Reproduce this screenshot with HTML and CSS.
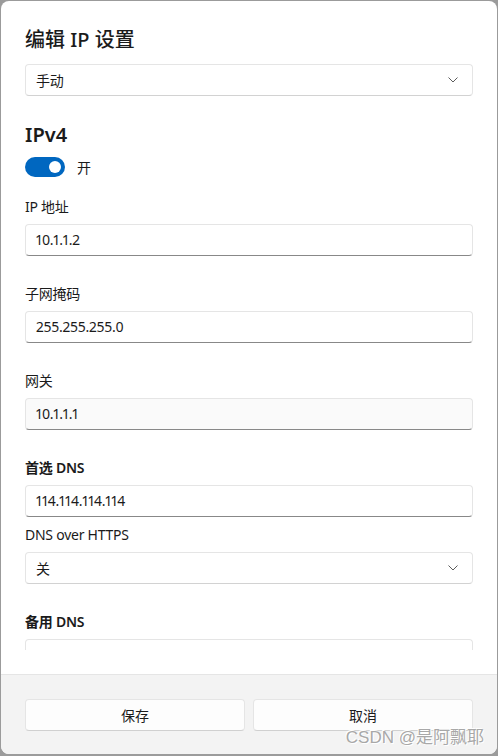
FILE: index.html
```html
<!DOCTYPE html>
<html lang="zh-CN">
<head>
  <meta charset="UTF-8">
  <title>编辑 IP 设置</title>
  <link rel="stylesheet" href="styles.css">
</head>
<body>
  <div class="dialog">
    <div class="dialog-body">
      <div class="scroll">
        <h1 class="title">编辑 IP 设置</h1>
        <div class="combo">
          <span>手动</span>
          <svg class="chevron" width="10" height="6" viewBox="0 0 10 6"><path d="M0.5 0.5 L5 5 L9.5 0.5" fill="none" stroke="#5c5c5c" stroke-width="1"/></svg>
        </div>

        <h2 class="section">IPv4</h2>
        <div class="toggle-row">
          <span class="toggle on"><span class="knob"></span></span>
          <span>开</span>
        </div>

        <div class="field first">
          <label>IP 地址</label>
          <div class="textbox">10.1.1.2</div>
        </div>
        <div class="field">
          <label>子网掩码</label>
          <div class="textbox">255.255.255.0</div>
        </div>
        <div class="field">
          <label>网关</label>
          <div class="textbox muted">10.1.1.1</div>
        </div>
        <div class="field">
          <label class="strong">首选 DNS</label>
          <div class="textbox">114.114.114.114</div>
        </div>
        <div class="field tight">
          <label>DNS over HTTPS</label>
          <div class="combo">
            <span>关</span>
            <svg class="chevron" width="10" height="6" viewBox="0 0 10 6"><path d="M0.5 0.5 L5 5 L9.5 0.5" fill="none" stroke="#5c5c5c" stroke-width="1"/></svg>
          </div>
        </div>
        <div class="field">
          <label class="strong">备用 DNS</label>
          <div class="textbox"></div>
        </div>
      </div>
    </div>

    <div class="dialog-footer">
      <button class="btn">保存</button>
      <button class="btn">取消</button>
    </div>
  </div>

  <div class="watermark">CSDN @是阿飘耶</div>
</body>
</html>
```

FILE: styles.css
```css
body {
  margin: 0;
  height: 756px;
  background: #9b9b9b;
  font-family: "Noto Sans", "Noto Sans CJK SC", sans-serif;
  font-size: 14px;
  font-variant-numeric: proportional-nums;
  letter-spacing: -0.25px;
  color: #1b1b1b;
  overflow: hidden;
}
.dialog {
  margin: 1px 1px 0 1px;
  height: 753px;
  width: 496px;
  background: #fff;
  border-radius: 8px;
  display: flex;
  flex-direction: column;
  overflow: hidden;
}
.dialog-body {
  flex: 1;
  padding: 25px 24px 24px 24px;
  min-height: 0;
}
.scroll {
  height: 100%;
  overflow: hidden;
}
.title {
  margin: 0 0 10px 0;
  font-size: 20px;
  line-height: 28px;
  font-weight: 500;
  letter-spacing: 0;
}
.combo {
  height: 30px;
  border: 1px solid #e5e5e5;
  border-bottom-color: #d2d2d2;
  border-radius: 4px;
  display: flex;
  align-items: center;
  justify-content: space-between;
  padding: 0 14px 0 10px;
  background: #fff;
}
.chevron {
  display: block;
}
.section {
  margin: 25px 0 8px 0;
  font-size: 20px;
  line-height: 28px;
  font-weight: 600;
  letter-spacing: 0;
}
.toggle-row {
  display: flex;
  align-items: center;
  gap: 12px;
  height: 20px;
}
.toggle {
  width: 40px;
  height: 20px;
  border-radius: 10px;
  background: #0067c0;
  display: flex;
  align-items: center;
  justify-content: flex-end;
  padding: 0 4px;
  box-sizing: border-box;
}
.knob {
  width: 12px;
  height: 12px;
  border-radius: 50%;
  background: #fff;
}
.field {
  margin-top: 28px;
}
.field.first {
  margin-top: 20px;
}
.field.tight {
  margin-top: 8px;
}
.field label {
  display: block;
  line-height: 20px;
  margin-bottom: 7px;
}
.field label.strong {
  font-weight: 600;
}
.textbox {
  height: 30px;
  line-height: 30px;
  border: 1px solid #e5e5e5;
  border-bottom-color: #888;
  border-radius: 4px;
  padding: 0 10px;
  background: #fff;
}
.textbox.muted {
  background: #fafafa;
}
.dialog-footer {
  height: 80px;
  border-top: 1px solid #e5e5e5;
  background: #f3f3f3;
  padding: 24px 24px 0 24px;
  display: flex;
  gap: 8px;
  box-sizing: border-box;
}
.btn {
  flex: 1;
  height: 32px;
  border: 1px solid #e5e5e5;
  border-bottom-color: #d0d0d0;
  border-radius: 4px;
  background: #fdfdfd;
  font-family: inherit;
  font-size: 14px;
  color: #1b1b1b;
}
.watermark {
  position: absolute;
  right: 14px;
  bottom: 8px;
  font-family: "Liberation Sans", "Noto Sans CJK SC", sans-serif;
  font-size: 17px;
  letter-spacing: 0;
  color: #a8a8a8;
  text-shadow: 1px 1px 0 #fff, -1px -1px 0 #fff;
}
```
